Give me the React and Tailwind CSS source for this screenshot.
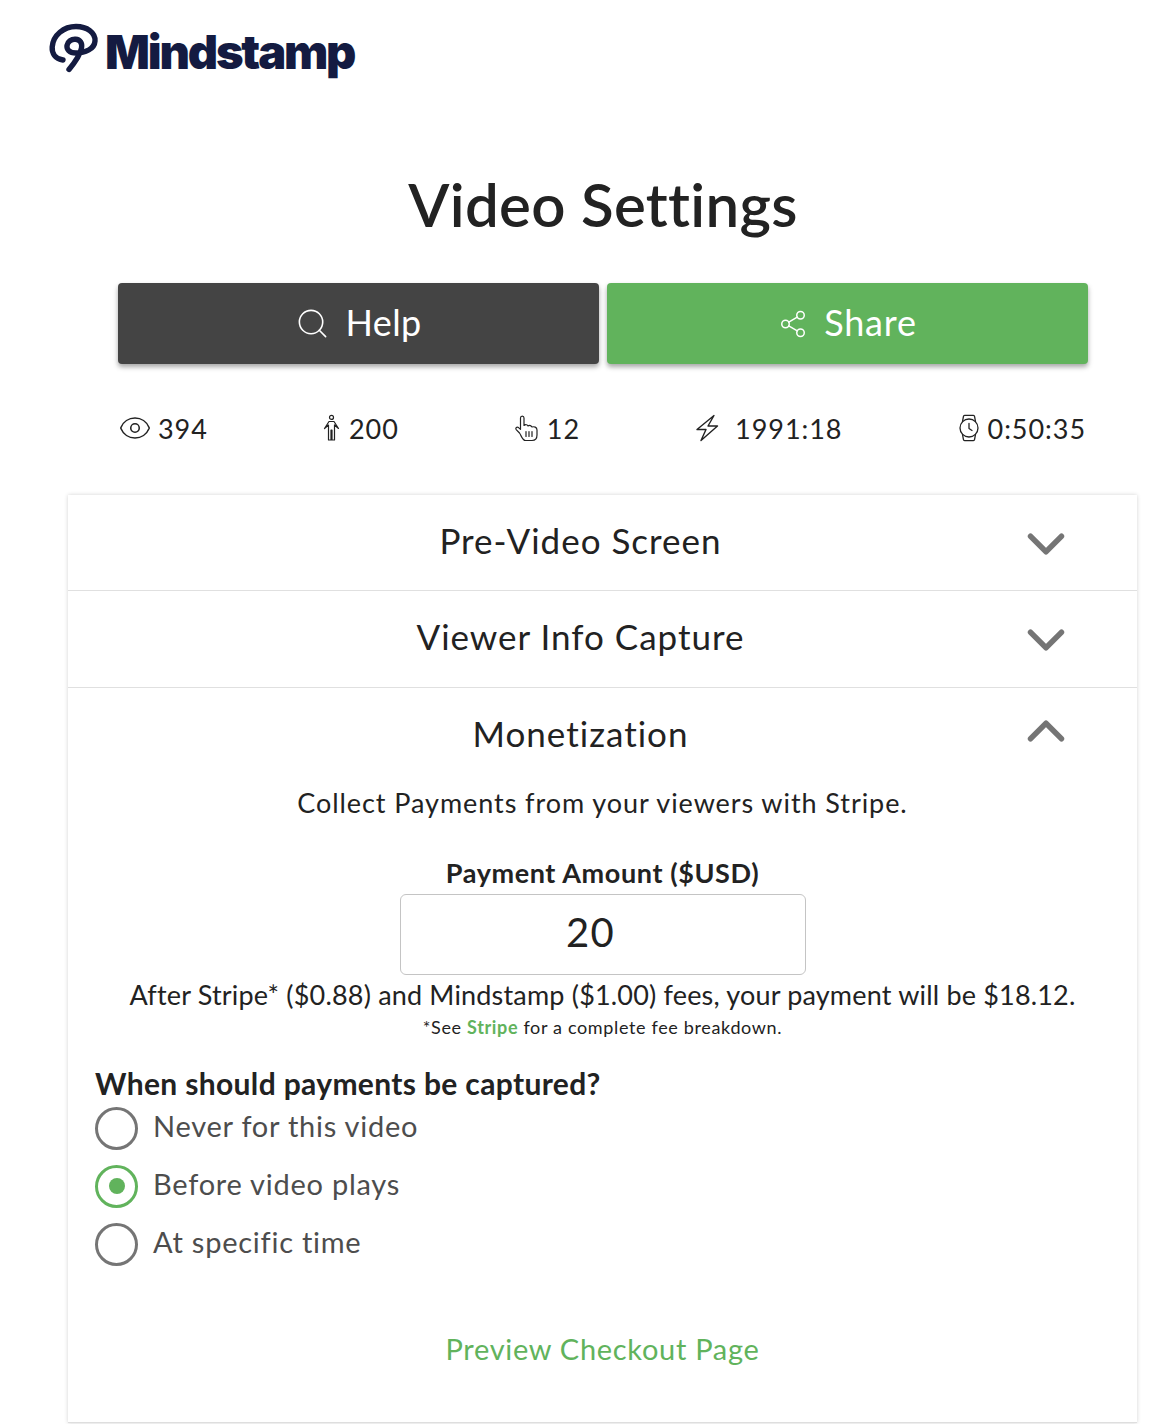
import React from "react";
import { Search, Share2, Eye, ChevronDown, ChevronUp } from "lucide-react";

const Person = () => (
  <svg width="18" height="28" viewBox="0 0 18 28" fill="none" stroke="#222" strokeWidth="1.2" strokeLinejoin="round" strokeLinecap="round">
    <circle cx="8.5" cy="3.4" r="2" />
    <path d="M1.5 14.5 L6 7.5 H11 L15.5 14.5 L11.5 11 V26 H9 V16 H8 V26 H5.5 V11 Z" />
  </svg>
);
const HandIcon = () => (
  <svg width="25" height="28" viewBox="0 0 25 28" fill="none" stroke="#222" strokeWidth="1.2" strokeLinejoin="round" strokeLinecap="round">
    <path d="M5.5 19 L2.2 15.6 C1 14 3 12.5 4.5 13.6 L6.5 15.4 V4 C6.5 1.4 10 1.4 10 4 V11.5 C11.5 10.2 13.5 10.6 14 12 C15.6 11 17.4 11.5 18 13 C20 12.4 23 13 23 16 V21 C23 24.5 21 26.5 18 26.5 H11.5 C8.5 26.5 7.5 22 5.5 19 Z" />
    <path d="M12 17.5 V22.5 M15 17.5 V22.5 M18 17.5 V22.5" />
  </svg>
);
const Bolt = () => (
  <svg width="24" height="28" viewBox="0 0 24 28" fill="none" stroke="#222" strokeWidth="1.4" strokeLinejoin="round" strokeLinecap="round">
    <path d="M19 1.5 L2 15.5 H11 L6 26.5 L22.5 12 H13 L19 1.5 Z" />
  </svg>
);
const Watch = () => (
  <svg width="22" height="28" viewBox="0 0 22 28" fill="none" stroke="#222" strokeWidth="1.3" strokeLinejoin="round" strokeLinecap="round">
    <circle cx="11" cy="14" r="9" />
    <path d="M4.5 7.6 L5.4 2.6 C5.5 2 6 1.4 6.6 1.4 H15.4 C16 1.4 16.5 2 16.6 2.6 L17.5 7.6" />
    <path d="M4.5 20.4 L5.4 25.4 C5.5 26 6 26.6 6.6 26.6 H15.4 C16 26.6 16.5 26 16.6 25.4 L17.5 20.4" />
    <path d="M11 9.5 V14.5 L14 16.5" />
  </svg>
);
const LogoMark = () => (
  <svg width="50" height="52" viewBox="0 0 50 52" fill="none" stroke="#141b41" strokeWidth="5.4" strokeLinecap="round" strokeLinejoin="round">
    <path d="M14 37 C6 36 2.8 30 3.2 24 C4 12 15 3.5 27 3.5 C38 3.5 46.5 9.5 46 18 C45.5 26 36 30 27 30 C20 30 17.5 26 18 22.5 C18.6 18.5 22.5 16 26.5 16.3 C31 16.6 33.5 20 32.5 25 C31.6 30 27 38 20 46.5" />
  </svg>
);

function Stat({ icon, label, className = "gap-2" }) {
  return (
    <div className={`flex items-center ${className}`}>
      {icon}
      <span className="text-[27px] leading-none tracking-[0.95px] text-[#222]">{label}</span>
    </div>
  );
}

function Radio({ label, checked }) {
  return (
    <div className="flex h-[58px] items-center gap-[15px]">
      <span className={`flex size-[43px] items-center justify-center rounded-full border-[3.5px] ${checked ? "border-[#61b35c]" : "border-[#757575]"}`}>
        {checked && <span className="size-[16px] rounded-full bg-[#61b35c]" />}
      </span>
      <span className="-mt-[5px] text-[29px] leading-none tracking-[0.75px] text-[#4d4d4d]">{label}</span>
    </div>
  );
}

function Row({ title, open, className = "h-[96px]" }) {
  return (
    <div className={`relative flex items-center justify-center pr-[44px] ${className}`}>
      <span className="-mt-[5px] text-[35px] leading-none tracking-[1px] text-[#222]">{title}</span>
      <span className={`absolute right-[71px] ${open ? "top-[23px]" : "top-[29px]"}`}>
        {open ? (
          <ChevronUp size={62} strokeWidth={2.1} color="#757575" className="-m-[11px]" />
        ) : (
          <ChevronDown size={62} strokeWidth={2.1} color="#757575" className="-m-[11px]" />
        )}
      </span>
    </div>
  );
}

export default function App() {
  return (
    <div className="h-[1424px] w-[1168px] overflow-hidden bg-white font-['Lato','Noto_Sans',sans-serif] text-[#222]">
      <header className="flex h-[88px] items-start gap-[6px] pl-[49px] pt-[23px]">
        <LogoMark />
        <span className="mt-[2px] font-['Inter',sans-serif] text-[47px] font-black leading-[54px] tracking-[-2.2px] text-[#141b41]">Mindstamp</span>
      </header>

      <h1 className="mt-[83px] pl-[38px] text-center text-[60px] font-semibold leading-[66px] tracking-[0.3px]">Video Settings</h1>

      <div className="mt-[46px] flex gap-[8px] pl-[118px]">
        <button className="flex h-[81px] w-[481px] items-center justify-center gap-[15px] rounded-[4px] bg-[#444444] text-white shadow-[0_3px_5px_rgba(0,0,0,0.35)]">
          <Search size={35} strokeWidth={1.1} />
          <span className="-mt-[4px] text-[36px] leading-none tracking-[0.4px]">Help</span>
        </button>
        <button className="flex h-[81px] w-[481px] items-center justify-center gap-[16px] rounded-[4px] bg-[#61b35c] text-white shadow-[0_3px_5px_rgba(0,0,0,0.35)]">
          <Share2 size={30} strokeWidth={1.2} />
          <span className="-mt-[4px] text-[36px] leading-none tracking-[0.8px]">Share</span>
        </button>
      </div>

      <div className="mt-[48px] mb-[51px] flex h-[32px] items-center justify-between pl-[118px] pr-[82px]">
        <Stat icon={<Eye size={34} strokeWidth={1.1} color="#222" />} label="394" className="gap-[6px]" />
        <Stat icon={<Person />} label="200" />
        <Stat icon={<HandIcon />} label="12" />
        <Stat icon={<Bolt />} label="1991:18" className="gap-[16px]" />
        <Stat icon={<Watch />} label="0:50:35" />
      </div>

      <section className="ml-[68px] w-[1069px] border-b border-[#dedede] bg-white shadow-[0_0_4px_rgba(0,0,0,0.18)]">
        <Row title="Pre-Video Screen" className="h-[95px]" />
        <div className="h-px bg-[#e0e0e0]" />
        <Row title="Viewer Info Capture" />
        <div className="h-px bg-[#e0e0e0]" />
        <Row title="Monetization" open />

        <div className="flex h-[638px] flex-col">
          <p className="-mt-[1px] text-center text-[27px] leading-[40px] tracking-[0.93px]">Collect Payments from your viewers with Stripe.</p>
          <p className="mt-[33px] text-center text-[27px] font-bold leading-[34px] tracking-[0.6px]">Payment Amount ($USD)</p>
          <div className="mx-auto mt-[4px] flex h-[81px] w-[406px] items-center justify-center rounded-[6px] border border-[#c4c4c4] pb-[6px] pr-[24px] text-[40px] tracking-[1.2px]">20</div>
          <p className="text-center text-[27px] leading-[40px] tracking-[0.18px]">After Stripe* ($0.88) and Mindstamp ($1.00) fees, your payment will be $18.12.</p>
          <p className="text-center text-[18px] leading-[24px] tracking-[0.65px]">*See <span className="font-bold text-[#61b35c]">Stripe</span> for a complete fee breakdown.</p>
          <p className="ml-[27px] mt-[26px] text-[30px] font-bold leading-[36px] tracking-[0.35px]">When should payments be captured?</p>
          <div className="ml-[27px] mt-[-2px] flex flex-col">
            <Radio label="Never for this video" />
            <Radio label="Before video plays" checked />
            <Radio label="At specific time" />
          </div>
          <p className="mt-[56px] text-center text-[29px] leading-[40px] tracking-[0.7px] text-[#61b35c]">Preview Checkout Page</p>
        </div>
      </section>
    </div>
  );
}
